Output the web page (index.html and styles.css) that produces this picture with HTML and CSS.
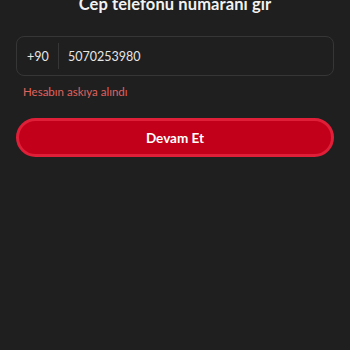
FILE: index.html
```html
<!DOCTYPE html>
<html lang="tr">
<head>
<meta charset="utf-8">
<link rel="stylesheet" href="styles.css">
</head>
<body>
<main class="page">
  <h1 class="title">Cep telefonu numaranı gir</h1>
  <div class="phone-field">
    <span class="prefix">+90</span>
    <span class="divider"></span>
    <span class="number">5070253980</span>
  </div>
  <p class="error">Hesabın askıya alındı</p>
  <button class="cta">Devam Et</button>
</main>
</body>
</html>
```
FILE: styles.css
```css
html, body {
  margin: 0;
  padding: 0;
  background: #1f1f1f;
  height: 100%;
}
body {
  font-family: Lato, "Noto Sans", sans-serif;
  color: #e8e8e8;
}
.page {
  padding: 0 16px;
  display: flex;
  flex-direction: column;
}
.title {
  margin: -8px 0 0;
  font-size: 16.5px;
  line-height: 24px;
  font-weight: 700;
  letter-spacing: 0.1px;
  text-align: center;
  color: #f2f2f2;
}
.phone-field {
  margin-top: 20px;
  height: 38px;
  border: 1px solid #363636;
  border-radius: 8px;
  display: flex;
  align-items: center;
  font-size: 12.5px;
  color: #e6e6e6;
}
.prefix {
  width: 31px;
  padding-left: 10px;
}
.divider {
  width: 1px;
  height: 26px;
  background: #363636;
}
.number {
  padding-left: 9px;
}
.error {
  margin: 8px 0 0 7px;
  font-size: 11.5px;
  line-height: 16px;
  color: #e0625e;
}
.cta {
  margin-top: 18px;
  height: 39px;
  border: 3px solid #df1f38;
  border-radius: 20px;
  background: #c3001a;
  color: #ffffff;
  font-family: Lato, "Noto Sans", sans-serif;
  font-size: 13.5px;
  font-weight: 700;
}
```
